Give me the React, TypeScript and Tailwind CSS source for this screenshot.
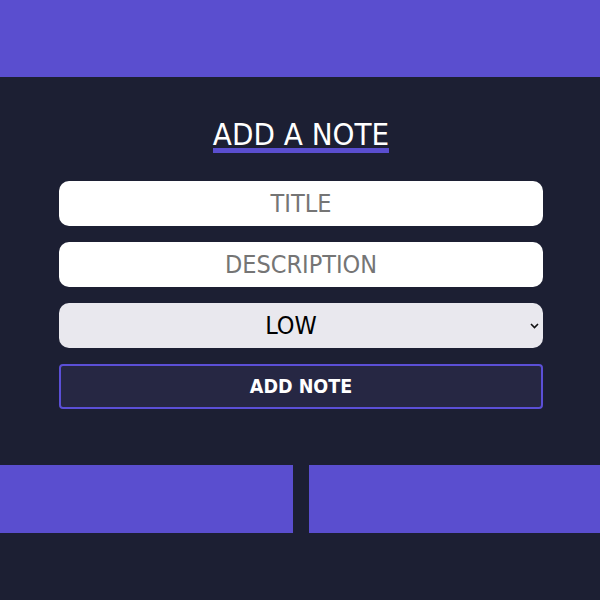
export default function App() {
  return (
    <div className="min-h-[600px] bg-[#1c1f33]" style={{ fontFamily: '"DejaVu Sans Condensed", "DejaVu Sans", Verdana, sans-serif' }}>
      {/* Top bar */}
      <div className="h-[77px] bg-[#5a4ecf]"></div>

      {/* Form */}
      <div className="ml-[59px] w-[484px] pt-[43px]">
        <div className="flex justify-center">
          <h1 className="border-b-[5px] border-[#5a4ecf] text-[31px] font-normal leading-[28px] text-white">ADD A NOTE</h1>
        </div>
        <form className="mt-[28px] flex flex-col gap-4">
          <input
            type="text"
            placeholder="TITLE"
            className="h-[45px] rounded-[10px] bg-white text-center text-[25px] text-black outline-none placeholder:text-[#757575]"
          />
          <input
            type="text"
            placeholder="DESCRIPTION"
            className="h-[45px] rounded-[10px] bg-white text-center text-[25px] text-black outline-none placeholder:text-[#757575]"
          />
          <div className="relative">
            <select
              defaultValue="low"
              className="h-[45px] w-full appearance-none rounded-[10px] bg-[#e9e8ee] pr-[20px] text-center text-[25px] text-black outline-none [text-align-last:center]"
            >
              <option value="low">LOW</option>
              <option value="medium">MEDIUM</option>
              <option value="high">HIGH</option>
            </select>
            <svg
              className="pointer-events-none absolute right-[4px] top-[20px]"
              width="9"
              height="6"
              viewBox="0 0 9 6"
              fill="none"
            >
              <path d="M1 1l3.5 3.5L8 1" stroke="#111" strokeWidth="1.6" />
            </svg>
          </div>
          <button
            type="button"
            className="h-[45px] rounded-[4px] border-2 border-[#5b4fd6] bg-[#262743] text-[19.5px] font-bold text-white"
          >
            ADD NOTE
          </button>
        </form>
      </div>

      {/* Notes */}
      <div className="mt-[56px] grid grid-cols-[293px_1fr] gap-4">
        <div className="h-[68px] bg-[#5a4ecf]"></div>
        <div className="h-[68px] bg-[#5a4ecf]"></div>
      </div>
    </div>
  );
}
